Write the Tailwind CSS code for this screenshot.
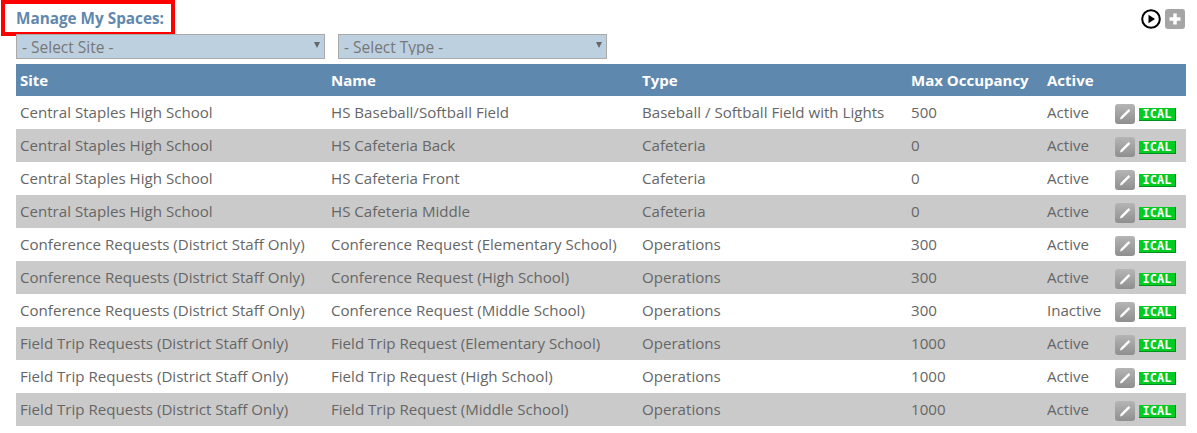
<!DOCTYPE html>
<html lang="en">
<head>
    <meta charset="UTF-8">
    <title>Manage My Spaces</title>
    <script src="https://cdn.jsdelivr.net/npm/@tailwindcss/browser@4"></script>
</head>
<body class="bg-white font-['Open_Sans',sans-serif] text-[#666] h-[433px] overflow-hidden">
    <div class="relative px-4 pt-[2px] w-[1186px]">
        <!-- red highlight round the heading -->
        <div class="absolute left-[1px] top-0 w-[174px] h-[36px] border-4 border-[#f00]"></div>

        <div class="flex items-center justify-between h-[33px]">
            <h1 class="text-[15.3px] font-bold text-[#5f88ae] leading-[33px]">Manage My Spaces:</h1>
            <div class="flex items-center gap-[4px] mr-[-15px] mb-[-1px]">
                <svg width="20" height="20" viewBox="0 0 20 20"><circle cx="10" cy="10" r="8.800" fill="#fff" stroke="#000" stroke-width="2"/><path d="M7.500 5.800 14 10l-6.500 4.200z" fill="#000"/></svg>
                <span class="flex items-center justify-center w-[20px] h-[20px] rounded-[3px] bg-[#a5a5a5]">
                    <svg width="14" height="14" viewBox="0 0 14 14"><path d="M7 1.500v11M1.500 7h11" stroke="#fff" stroke-width="3.500"/></svg>
                </span>
            </div>
        </div>

        <div class="flex gap-[13px] mt-[-1px]">
            <div class="relative w-[309px]">
                <select class="appearance-none w-full h-[25px] bg-[#bdd0e0] border border-[#aaa] text-[15.5px] leading-none text-[#777] pl-[5px] pt-[2px]">
                    <option>- Select Site -</option>
                </select>
                <span class="absolute right-[5px] top-[8px] w-0 h-0 border-x-[3.500px] border-x-transparent border-t-[6px] border-t-[#666]"></span>
            </div>
            <div class="relative w-[269px]">
                <select class="appearance-none w-full h-[25px] bg-[#bdd0e0] border border-[#aaa] text-[15.5px] leading-none text-[#777] pl-[5px] pt-[2px]">
                    <option>- Select Type -</option>
                </select>
                <span class="absolute right-[5px] top-[8px] w-0 h-0 border-x-[3.500px] border-x-transparent border-t-[6px] border-t-[#666]"></span>
            </div>
        </div>

        <table class="w-[1170px] table-fixed mt-[5px] text-[15.1px] border-collapse">
            <thead>
                <tr class="bg-[#5f88ae] text-white font-bold text-left h-[32px] text-[15px]">
                    <th class="w-[311px] pl-[4px]">Site</th>
                    <th class="w-[311px] pl-[4px]">Name</th>
                    <th class="w-[269px] pl-[4px]">Type</th>
                    <th class="w-[136px] pl-[4px]">Max Occupancy</th>
                    <th class="w-[68px] pl-[4px]">Active</th>
                    <th></th>
                </tr>
            </thead>
            <tbody id="rows"></tbody>
        </table>
    </div>

    <script>
        const spaces = [
            ['Central Staples High School', 'HS Baseball/Softball Field', 'Baseball / Softball Field with Lights', '500', 'Active'],
            ['Central Staples High School', 'HS Cafeteria Back', 'Cafeteria', '0', 'Active'],
            ['Central Staples High School', 'HS Cafeteria Front', 'Cafeteria', '0', 'Active'],
            ['Central Staples High School', 'HS Cafeteria Middle', 'Cafeteria', '0', 'Active'],
            ['Conference Requests (District Staff Only)', 'Conference Request (Elementary School)', 'Operations', '300', 'Active'],
            ['Conference Requests (District Staff Only)', 'Conference Request (High School)', 'Operations', '300', 'Active'],
            ['Conference Requests (District Staff Only)', 'Conference Request (Middle School)', 'Operations', '300', 'Inactive'],
            ['Field Trip Requests (District Staff Only)', 'Field Trip Request (Elementary School)', 'Operations', '1000', 'Active'],
            ['Field Trip Requests (District Staff Only)', 'Field Trip Request (High School)', 'Operations', '1000', 'Active'],
            ['Field Trip Requests (District Staff Only)', 'Field Trip Request (Middle School)', 'Operations', '1000', 'Active']
        ];

        const actions = `
            <div class="flex items-center gap-[4px] mt-[2px]">
                <span class="flex items-center justify-center w-[20px] h-[20px] rounded-[3px] bg-gradient-to-b from-[#b5b5b5] to-[#8f8f8f]">
                    <svg width="16" height="16" viewBox="0 0 16 16"><path d="M3 13.500 3.600 11 11.600 3l1.700 1.700-8 8z" fill="#fff"/></svg>
                </span>
                <span class="flex items-center justify-center w-[37px] h-[13px] mt-[1px] bg-[#00cc22] border-b border-r border-[#009020] text-white font-['DejaVu_Sans_Mono',monospace] font-bold text-[12px] leading-none">ICAL</span>
            </div>`;

        document.getElementById('rows').innerHTML = spaces.map((row, i) => `
            <tr class="h-[33px] ${i % 2 ? 'bg-[#cacaca]' : 'bg-white'}">
                ${row.map(cell => `<td class="pl-[4px] whitespace-nowrap">${cell}</td>`).join('')}
                <td class="pl-[4px]">${actions}</td>
            </tr>`).join('');
    </script>
</body>
</html>
